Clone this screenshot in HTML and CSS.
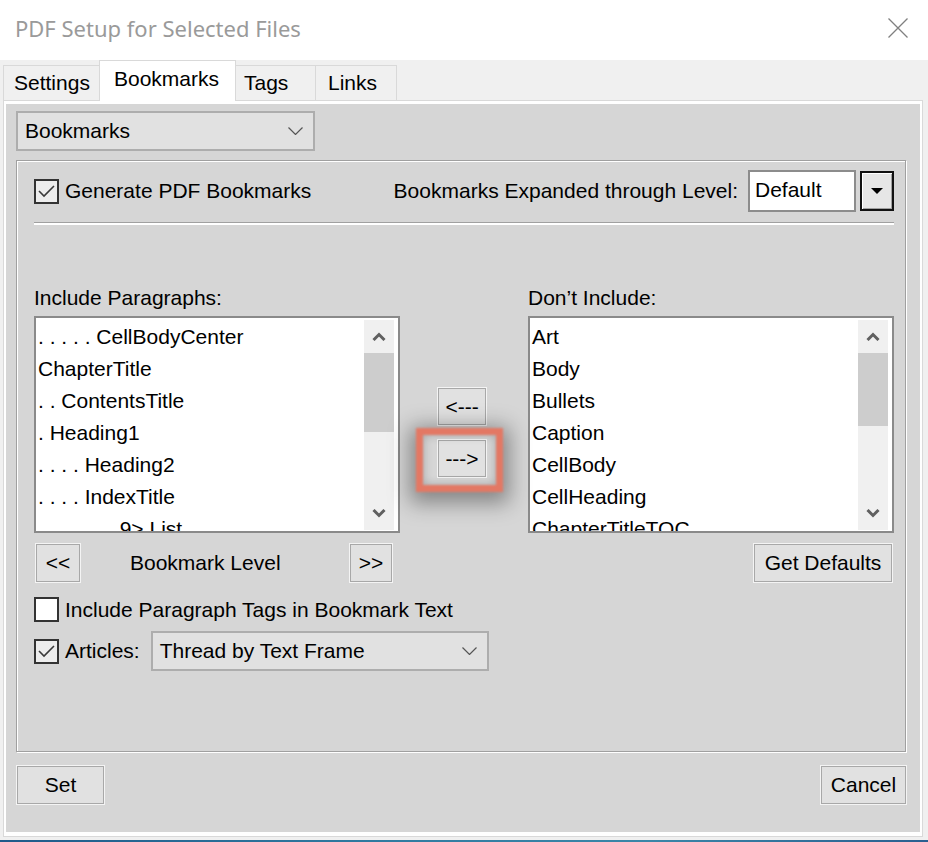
FILE: index.html
```html
<!DOCTYPE html>
<html>
<head>
<meta charset="utf-8">
<title>PDF Setup for Selected Files</title>
<link rel="stylesheet" href="styles.css">
</head>
<body>
<div class="window">
  <div class="titlebar">
    <span class="title">PDF Setup for Selected Files</span>
    <svg class="close" width="20" height="20" viewBox="0 0 20 20"><path d="M0.5 0.5L19.5 19.5M19.5 0.5L0.5 19.5" stroke="#808080" stroke-width="1.3" fill="none"/></svg>
  </div>
  <div class="tabs">
    <div class="tab tab-settings">Settings</div>
    <div class="tab tab-active">Bookmarks</div>
    <div class="tab tab-tags">Tags</div>
    <div class="tab tab-links">Links</div>
  </div>
  <div class="tabpage">
    <div class="panel">
      <div class="combo combo-top">
        <span>Bookmarks</span>
        <svg width="15" height="8" viewBox="0 0 15 8"><path d="M0.5 0.5L7.5 7.5L14.5 0.5" stroke="#555" stroke-width="1.2" fill="none"/></svg>
      </div>
      <div class="group">
        <div class="row-top">
          <div class="check">
            <span class="box box-on"><svg width="17" height="13" viewBox="0 0 17 13"><path d="M1 6L6 11L16 1" stroke="#3a3a3a" stroke-width="1.6" fill="none"/></svg></span>
            <span>Generate PDF Bookmarks</span>
          </div>
          <div class="level">
            <span>Bookmarks Expanded through Level:</span>
            <span class="field">Default</span>
            <span class="dropbtn"><svg width="12" height="6" viewBox="0 0 12 6"><polygon points="0,0 12,0 6,6" fill="#000"/></svg></span>
          </div>
        </div>
        <div class="sep"></div>
        <div class="lists">
          <div class="lbl">Include Paragraphs:</div>
          <div></div>
          <div class="lbl">Don’t Include:</div>

          <div class="listbox">
            <div class="items">
              <div class="item">. . . . . CellBodyCenter</div>
              <div class="item">ChapterTitle</div>
              <div class="item">. . ContentsTitle</div>
              <div class="item">. Heading1</div>
              <div class="item">. . . . Heading2</div>
              <div class="item">. . . . IndexTitle</div>
              <div class="item">. . . . . . . 9&gt; List</div>
            </div>
            <div class="scroll">
              <div class="arrow"><svg width="14" height="9" viewBox="0 0 14 9"><path d="M1.5 8L7 2.5L12.5 8" stroke="#606060" stroke-width="3" fill="none"/></svg></div>
              <div class="thumb thumb-left"></div>
              <div class="track"></div>
              <div class="arrow"><svg width="14" height="9" viewBox="0 0 14 9"><path d="M1.5 1L7 6.5L12.5 1" stroke="#606060" stroke-width="3" fill="none"/></svg></div>
            </div>
          </div>

          <div class="movers">
            <button class="btn btn-move">&lt;---</button>
            <span class="hl"><button class="btn btn-move">---&gt;</button></span>
          </div>

          <div class="listbox">
            <div class="items">
              <div class="item">Art</div>
              <div class="item">Body</div>
              <div class="item">Bullets</div>
              <div class="item">Caption</div>
              <div class="item">CellBody</div>
              <div class="item">CellHeading</div>
              <div class="item">ChapterTitleTOC</div>
            </div>
            <div class="scroll">
              <div class="arrow"><svg width="14" height="9" viewBox="0 0 14 9"><path d="M1.5 8L7 2.5L12.5 8" stroke="#606060" stroke-width="3" fill="none"/></svg></div>
              <div class="thumb thumb-right"></div>
              <div class="track"></div>
              <div class="arrow"><svg width="14" height="9" viewBox="0 0 14 9"><path d="M1.5 1L7 6.5L12.5 1" stroke="#606060" stroke-width="3" fill="none"/></svg></div>
            </div>
          </div>

          <div class="levelrow">
            <button class="btn btn-prev">&lt;&lt;</button>
            <span class="level-text">Bookmark Level</span>
            <button class="btn btn-next">&gt;&gt;</button>
          </div>
          <div></div>
          <div class="defaults-row">
            <button class="btn btn-defaults">Get Defaults</button>
          </div>
        </div>

        <div class="check row-tags">
          <span class="box"></span>
          <span>Include Paragraph Tags in Bookmark Text</span>
        </div>
        <div class="articles">
          <div class="check">
            <span class="box box-on"><svg width="17" height="13" viewBox="0 0 17 13"><path d="M1 6L6 11L16 1" stroke="#3a3a3a" stroke-width="1.6" fill="none"/></svg></span>
            <span>Articles:</span>
          </div>
          <div class="combo combo-articles">
            <span>Thread by Text Frame</span>
            <svg width="15" height="8" viewBox="0 0 15 8"><path d="M0.5 0.5L7.5 7.5L14.5 0.5" stroke="#555" stroke-width="1.2" fill="none"/></svg>
          </div>
        </div>
      </div>
      <div class="footer">
        <button class="btn btn-set">Set</button>
        <button class="btn btn-cancel">Cancel</button>
      </div>
    </div>
  </div>
  <div class="taskbar"></div>
</div>
</body>
</html>
```

FILE: styles.css
```css
* { box-sizing: border-box; }
html, body { margin: 0; padding: 0; }
body {
  width: 928px;
  height: 842px;
  overflow: hidden;
  background: #f0f0f0;
  font-family: "Liberation Sans", Arial, sans-serif;
  font-size: 21px;
  color: #000;
}
.window {
  width: 928px;
  height: 842px;
  display: flex;
  flex-direction: column;
  background: #f0f0f0;
}
.titlebar {
  height: 60px;
  flex: none;
  background: #fff;
  display: flex;
  justify-content: space-between;
  align-items: flex-start;
  padding: 13px 20px 0 15px;
}
.title {
  font-family: "Noto Sans", "Open Sans", sans-serif;
  font-size: 22px;
  line-height: 30px;
  color: #9a9a9a;
}
.close { margin-top: 5px; }

.tabs {
  height: 40px;
  flex: none;
  display: flex;
  align-items: flex-end;
  padding-left: 3px;
}
.tab {
  height: 35px;
  border: 1px solid #d9d9d9;
  border-bottom: none;
  background: #f0f0f0;
  line-height: 33px;
  margin-right: -1px;
  white-space: nowrap;
}
.tab-settings { width: 97px; padding-left: 10px; }
.tab-active {
  width: 137px;
  height: 41px;
  padding-left: 14px;
  margin-bottom: -1px;
  background: #fff;
  line-height: 35px;
  position: relative;
  z-index: 1;
}
.tab-tags { width: 81px; padding-left: 8px; }
.tab-links { width: 82px; padding-left: 12px; }

.tabpage {
  flex: none;
  margin-left: 3px;
  width: 920px;
  height: 737px;
  border: 1px solid #d9d9d9;
  background: #fff;
  padding: 3px 2px 4px 2px;
}
.panel {
  height: 100%;
  background: #d6d6d6;
  padding: 7px 14px 0 10px;
}

.combo {
  display: flex;
  align-items: center;
  justify-content: space-between;
  height: 40px;
  background: #e1e1e1;
  border: 2px solid #adadad;
  padding: 0 10px 0 7px;
  white-space: nowrap;
}
.combo-top { width: 299px; }
.combo-articles { width: 338px; margin-left: 11px; }

.group {
  margin-top: 9px;
  width: 890px;
  height: 592px;
  border: 1px solid #a0a0a0;
  box-shadow: inset 1px 1px 0 #fff, 1px 1px 0 #fff;
  padding: 9px 11px 0 17px;
}
.row-top {
  height: 42px;
  display: flex;
  align-items: center;
  justify-content: space-between;
}
.check {
  display: flex;
  align-items: center;
  gap: 6px;
  white-space: nowrap;
}
.box {
  width: 25px;
  height: 25px;
  flex: none;
  border: 2px solid #333;
  background: #fff;
  display: flex;
  align-items: center;
  justify-content: center;
}
.box-on { background: #ededed; }

.level {
  display: flex;
  align-items: center;
  white-space: nowrap;
}
.field {
  width: 108px;
  height: 42px;
  margin-left: 10px;
  border: 2px solid #8c8c8c;
  background: #fff;
  padding-left: 5px;
  line-height: 36px;
}
.dropbtn {
  width: 34px;
  height: 40px;
  margin-left: 4px;
  border: 2px solid #111;
  background: #e6e6e6;
  box-shadow: inset 1px 1px 0 #fff, inset -1px -1px 0 #a0a0a0;
  display: flex;
  align-items: center;
  justify-content: center;
}
.sep {
  margin-top: 10px;
  border-top: 1px solid #a0a0a0;
  border-bottom: 2px solid #fff;
}

.lists {
  margin-top: 61px;
  display: grid;
  grid-template-columns: 366px 128px 366px;
}
.lbl {
  line-height: 24px;
  margin-bottom: 6px;
  white-space: nowrap;
}
.listbox {
  height: 217px;
  border: 2px solid #8a8a8a;
  background: #fff;
  display: flex;
}
.items {
  flex: 1;
  overflow: hidden;
  padding: 3px 0 0 2px;
}
.item {
  line-height: 32px;
  white-space: nowrap;
}
.scroll {
  width: 30px;
  flex: none;
  margin: 2px 4px 1px 0;
  background: #f0f0f0;
  display: flex;
  flex-direction: column;
}
.arrow {
  height: 33px;
  flex: none;
  display: flex;
  align-items: center;
  justify-content: center;
}
.thumb { background: #cdcdcd; flex: none; }
.thumb-left { height: 79px; }
.thumb-right { height: 73px; }
.track { flex: 1; }

.btn {
  display: flex;
  align-items: center;
  justify-content: center;
  height: 40px;
  padding: 0;
  margin: 0;
  background: #e1e1e1;
  border: 1px solid #f4f4f4;
  box-shadow: inset 0 0 0 1px #a8a8a8;
  font-family: inherit;
  font-size: 21px;
  color: #000;
  white-space: nowrap;
}
.movers {
  padding: 71px 0 0 37px;
  display: flex;
  flex-direction: column;
  align-items: flex-start;
  gap: 13px;
}
.btn-move { width: 50px; height: 39px; }
.hl { position: relative; display: block; }
.hl::after {
  content: "";
  position: absolute;
  left: -21px;
  top: -11px;
  right: -16px;
  bottom: -14px;
  border: 7px solid rgba(228, 110, 88, 0.9);
  box-shadow: 0 5px 20px 6px rgba(0, 0, 0, 0.38), inset 0 0 10px rgba(0, 0, 0, 0.25);
  filter: blur(1px);
  pointer-events: none;
}

.levelrow {
  margin-top: 10px;
  height: 40px;
  display: flex;
  align-items: center;
  padding-left: 1px;
}
.btn-prev { width: 46px; }
.level-text { margin-left: 49px; white-space: nowrap; }
.btn-next { width: 44px; margin-left: auto; margin-right: 7px; }
.defaults-row {
  margin-top: 10px;
  display: flex;
  justify-content: flex-end;
  padding-right: 1px;
}
.btn-defaults { width: 140px; }

.row-tags { margin-top: 14px; height: 25px; }
.articles {
  margin-top: 9px;
  display: flex;
  align-items: center;
}

.footer {
  margin-top: 13px;
  margin-right: -1px;
  display: flex;
  justify-content: space-between;
}
.btn-set { width: 89px; }
.btn-cancel { width: 87px; }

.taskbar {
  flex: none;
  margin-top: 3px;
  height: 2px;
  background: linear-gradient(90deg, #1f5a8a, #2f7aa0 40%, #3a86a8 70%, #2a5f90);
}
```
